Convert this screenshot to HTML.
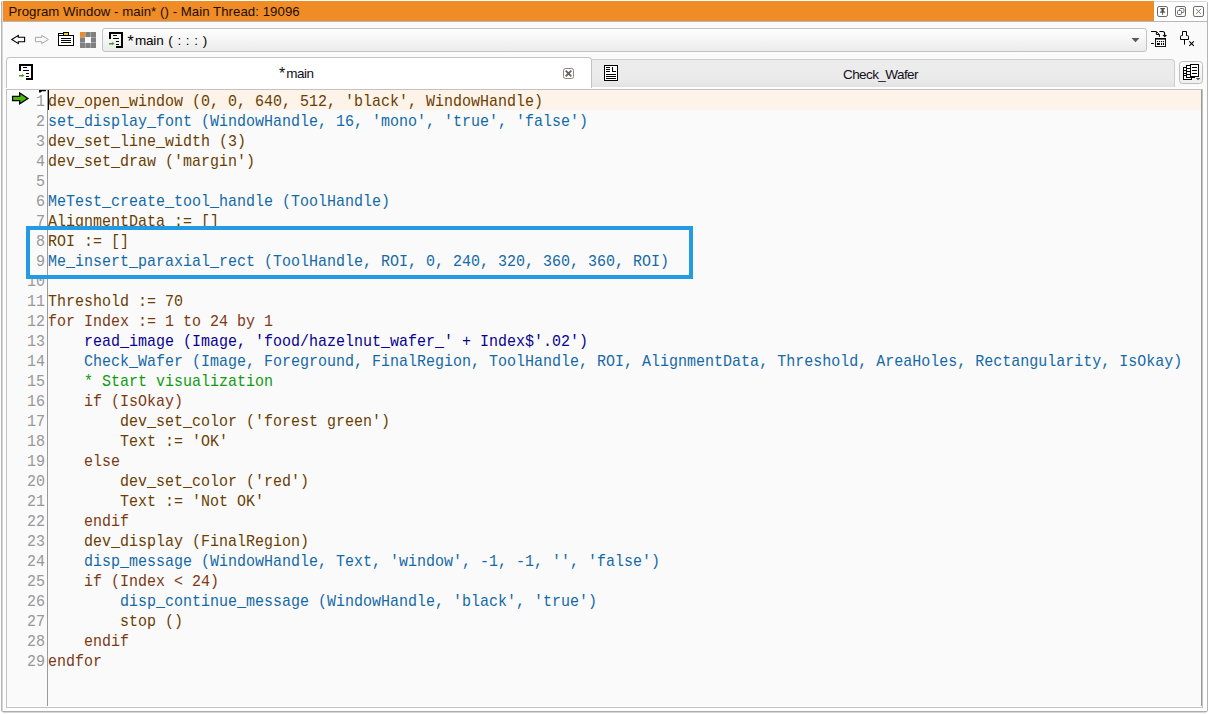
<!DOCTYPE html>
<html>
<head>
<meta charset="utf-8">
<title>Program Window</title>
<style>
html,body{margin:0;padding:0;}
body{width:1209px;height:714px;overflow:hidden;background:#ffffff;position:relative;font-family:"Liberation Sans",sans-serif;}
.abs{position:absolute;}
/* outer dock frame */
#frame{left:1px;top:1px;width:1207px;height:711px;box-sizing:border-box;border:1px solid #b4b4b4;border-bottom-color:#adadad;border-top-color:#d8d8d8;border-radius:0 3px 2px 2px;background:#fdfdfd;}
#frameL{left:2px;top:2px;width:1px;height:709px;background:#d9d9d9;}
#frameB{left:3px;top:712px;width:1203px;height:1px;background:#d6d6d6;}
#panel{left:3px;top:22px;width:1204px;height:66px;background:#fafafa;}
#title{left:3px;top:1px;width:1151px;height:20px;background:#f08c26;}
#title span{position:absolute;left:5.4px;top:3px;font-size:13.2px;line-height:15px;color:#200c00;white-space:nowrap;letter-spacing:0.06px;}
#titlebtns{left:1154px;top:2px;width:53px;height:19px;background:#ffffff;}
#titleline{left:3px;top:21px;width:1204px;height:1px;background:#b4b8bc;}
/* toolbar */
#combo{left:102px;top:28px;width:1045px;height:24px;box-sizing:border-box;border:1px solid #c2c2c2;border-radius:3px;background:linear-gradient(#fefefe,#f6f6f6 45%,#ebebeb);}
#combo span{position:absolute;left:25px;top:4px;font-size:13.5px;line-height:15px;color:#000;white-space:nowrap;word-spacing:1.45px;}
/* tabs */
#tabbase{left:7px;top:87px;width:1195px;height:2px;background:#fefefe;}
#tab1{left:6px;top:57px;width:586px;height:31px;box-sizing:border-box;border:1px solid #c3c3c3;border-bottom:none;border-radius:4px 4px 0 0;background:#ffffff;}
#tab2{left:592px;top:59px;width:583px;height:28px;box-sizing:border-box;border:1px solid #cdcdcd;border-left:none;border-bottom:none;border-radius:0 4px 0 0;background:linear-gradient(#ececec,#ebebeb 70%,#e2e2e2);}
.tabtxt{position:absolute;font-size:13.5px;line-height:15px;color:#10101a;white-space:nowrap;}
#tabbtn{left:1179px;top:61px;width:24px;height:23px;box-sizing:border-box;border:1px solid #bebebe;border-radius:3.5px;background:linear-gradient(#f9f9f9,#efefef);}
/* editor */
#editor{left:6px;top:89px;width:1197px;height:619px;box-sizing:border-box;border:1px solid #c2c2c2;background:#fafafa;}
#edR{left:1201px;top:90px;width:1px;height:616px;background:#9a9a9a;}
#edB{left:7px;top:706px;width:1195px;height:1px;background:#ffffff;}
#gutterline{left:47px;top:90px;width:1px;height:616px;background:#9a9a9a;}
#hl{left:48px;top:90px;width:1153px;height:20px;background:#fdf3e9;}
#numhl{left:38px;top:90px;width:9px;height:20px;background:#ffffff;}
#caret{left:48px;top:90px;width:1px;height:20px;background:#000;}
#code{left:48px;top:92.75px;transform:scaleY(1.06667);transform-origin:0 0;font-family:"Liberation Mono",monospace;font-size:15px;line-height:18.75px;white-space:pre;color:#6a3e02;margin:0;}
#nums{left:9px;top:92.75px;width:36px;transform:scaleY(1.06667);transform-origin:0 0;text-align:right;font-family:"Liberation Mono",monospace;font-size:15px;line-height:18.75px;white-space:pre;color:#989898;margin:0;}
.b{color:#1469a8;}
.n{color:#080094;}
.g{color:#109a10;}
.k{color:#6a3e02;}
.c{color:#7e3814;}
#roi{left:26px;top:226px;width:667px;height:53px;box-sizing:border-box;border:4px solid #229be4;}
#icons{left:0;top:0;}
</style>
</head>
<body>
<div id="frame" class="abs"></div>
<div id="frameL" class="abs"></div>
<div id="frameB" class="abs"></div>
<div id="panel" class="abs"></div>
<div id="title" class="abs"><span>Program Window - main* () - Main Thread: 19096</span></div>
<div id="titlebtns" class="abs"></div>
<div id="titleline" class="abs"></div>
<div id="combo" class="abs"><span style="font-size:16px;top:4.5px;left:24.6px;">*</span><span style="left:32px;letter-spacing:-0.2px;word-spacing:1.3px;">main ( : : : )</span></div>
<div id="tabbase" class="abs"></div>
<div id="tab2" class="abs"><span class="tabtxt" style="left:251px;top:7px;font-size:13.5px;letter-spacing:-0.58px;">Check_Wafer</span></div>
<div id="tab1" class="abs"><span class="tabtxt" style="left:272px;top:8px;font-size:16px;">*</span><span class="tabtxt" style="left:279.2px;top:8px;letter-spacing:-0.45px;">main</span></div>
<div id="tabbtn" class="abs"></div>
<div id="editor" class="abs"></div>
<div id="edR" class="abs"></div>
<div id="edB" class="abs"></div>
<div id="hl" class="abs"></div>
<div id="numhl" class="abs"></div>
<div id="gutterline" class="abs"></div>
<div id="caret" class="abs"></div>
<pre id="nums" class="abs">1
2
3
4
5
6
7
8
9
10
11
12
13
14
15
16
17
18
19
20
21
22
23
24
25
26
27
28
29</pre>
<pre id="code" class="abs"><span class="k">dev_open_window (0, 0, 640, 512, 'black', WindowHandle)</span>
<span class="b">set_display_font (WindowHandle, 16, 'mono', 'true', 'false')</span>
<span class="k">dev_set_line_width (3)</span>
<span class="k">dev_set_draw ('margin')</span>

<span class="b">MeTest_create_tool_handle (ToolHandle)</span>
<span class="k">AlignmentData := []</span>
<span class="k">ROI := []</span>
<span class="b">Me_insert_paraxial_rect (ToolHandle, ROI, 0, 240, 320, 360, 360, ROI)</span>

<span class="k">Threshold := 70</span>
<span class="c">for Index := 1 to 24 by 1</span>
    <span class="n">read_image (Image, 'food/hazelnut_wafer_' + Index$'.02')</span>
    <span class="b">Check_Wafer (Image, Foreground, FinalRegion, ToolHandle, ROI, AlignmentData, Threshold, AreaHoles, Rectangularity, IsOkay)</span>
    <span class="g">* Start visualization</span>
    <span class="c">if (IsOkay)</span>
        <span class="k">dev_set_color ('forest green')</span>
        <span class="k">Text := 'OK'</span>
    <span class="c">else</span>
        <span class="k">dev_set_color ('red')</span>
        <span class="k">Text := 'Not OK'</span>
    <span class="c">endif</span>
    <span class="k">dev_display (FinalRegion)</span>
    <span class="b">disp_message (WindowHandle, Text, 'window', -1, -1, '', 'false')</span>
    <span class="c">if (Index &lt; 24)</span>
        <span class="b">disp_continue_message (WindowHandle, 'black', 'true')</span>
        <span class="k">stop ()</span>
    <span class="c">endif</span>
<span class="c">endfor</span></pre>
<div id="roi" class="abs"></div>
<svg id="icons" class="abs" width="1209" height="714" viewBox="0 0 1209 714">

<!-- title buttons -->
<g fill="none" stroke="#6c6a68" stroke-width="1">
<rect x="1157.5" y="6.5" width="10" height="10" rx="1.6"/>
<rect x="1175.5" y="6.5" width="10" height="10" rx="1.6"/>
<rect x="1193.5" y="6.5" width="10" height="10" rx="1.6"/>
</g>
<!-- pin -->
<g fill="#545250">
<rect x="1160.3" y="8" width="4.6" height="1.2"/>
<rect x="1161.4" y="8" width="2.4" height="4"/>
<rect x="1160" y="11.5" width="5.2" height="1.2"/>
<rect x="1162.1" y="12" width="1" height="2.8"/>
</g>
<!-- restore -->
<g fill="none" stroke="#6c6a68" stroke-width="1">
<rect x="1179.5" y="8.5" width="4.4" height="4" rx="1"/>
<rect x="1177.5" y="10.5" width="4" height="4" rx="1" fill="#ffffff"/>
</g>
<!-- close -->
<g stroke="#6c6a68" stroke-width="0.9" fill="none">
<path d="M1196.1 8.9 L1201 13.9 M1201 8.9 L1196.1 13.9"/>
</g>

<!-- back arrow -->
<path d="M11.8 39.5 L18.3 35.4 L18.3 37.3 L24.6 37.3 L24.6 41.7 L18.3 41.7 L18.3 43.6 Z" fill="none" stroke="#000" stroke-width="1.1" stroke-linejoin="miter"/>
<!-- forward arrow (disabled) -->
<path d="M48.4 39.5 L41.8 35.4 L41.8 37.3 L35.4 37.3 L35.4 41.7 L41.8 41.7 L41.8 43.6 Z" fill="none" stroke="#a6a6a6" stroke-width="1" stroke-linejoin="miter"/>
<!-- clipboard -->
<g shape-rendering="crispEdges">
<rect x="58" y="33" width="16" height="13" fill="#ffffff"/>
<rect x="63" y="32" width="6" height="4" fill="#000"/>
<rect x="64" y="33" width="4" height="2" fill="#ffd200"/>
<rect x="58" y="33" width="6" height="1" fill="#000"/>
<rect x="58" y="35" width="16" height="1" fill="#000"/>
<rect x="58" y="33" width="1" height="13" fill="#000"/>
<rect x="73" y="35" width="1" height="11" fill="#000"/>
<rect x="58" y="45" width="16" height="1" fill="#000"/>
<rect x="59" y="34" width="4" height="1" fill="#ffffff"/>
<rect x="61" y="38" width="10" height="1" fill="#000"/>
<rect x="61" y="40" width="10" height="1" fill="#000"/>
<rect x="61" y="42" width="10" height="1" fill="#000"/>
</g>
<!-- grid -->
<g>
<rect x="80" y="32" width="16" height="16" fill="#c4c4c4"/>
<rect x="80" y="32" width="5" height="5" fill="#f08c26"/>
<rect x="85.6" y="32" width="4.8" height="5" fill="#808080"/>
<rect x="91" y="32" width="5" height="5" fill="#808080"/>
<rect x="80" y="37.6" width="5" height="4.8" fill="#808080"/>
<rect x="85" y="37" width="6" height="6" fill="#fbfbfb"/>
<rect x="91" y="37.6" width="5" height="4.8" fill="#808080"/>
<rect x="80" y="43" width="5" height="5" fill="#808080"/>
<rect x="85.6" y="43" width="4.8" height="5" fill="#808080"/>
<rect x="91" y="43" width="5" height="5" fill="#808080"/>
</g>
<g transform="translate(109,32)">
<g fill="#000" shape-rendering="crispEdges">
<rect x="0" y="0" width="14" height="2"/>
<rect x="0" y="0" width="2" height="7"/>
<rect x="12" y="0" width="2" height="16"/>
<rect x="7" y="14" width="7" height="2"/>
<rect x="4" y="3" width="4" height="1"/>
<rect x="4" y="6" width="6" height="1"/>
<rect x="7" y="9" width="3" height="1"/>
<rect x="7" y="12" width="3" height="1"/>
</g>
<path d="M0 10.9 L3 10.9 L3 10 L5.6 11.6 L3 13.3 L3 12.4 L0 12.4 Z" fill="#4e9a1c"/>
</g><g transform="translate(19,64)">
<g fill="#000" shape-rendering="crispEdges">
<rect x="0" y="0" width="14" height="2"/>
<rect x="0" y="0" width="2" height="7"/>
<rect x="12" y="0" width="2" height="16"/>
<rect x="7" y="14" width="7" height="2"/>
<rect x="4" y="3" width="4" height="1"/>
<rect x="4" y="6" width="6" height="1"/>
<rect x="7" y="9" width="3" height="1"/>
<rect x="7" y="12" width="3" height="1"/>
</g>
<path d="M0 10.9 L3 10.9 L3 10 L5.6 11.6 L3 13.3 L3 12.4 L0 12.4 Z" fill="#4e9a1c"/>
</g>
<!-- combo dropdown arrow -->
<path d="M1131.5 38 L1139.5 38 L1135.5 42.2 Z" fill="#5a5a5a"/>
<!-- toolbar right icon 1 -->
<g fill="none" stroke="#000" stroke-width="1">
<path d="M1151 31.5 L1156.3 31.5 L1159.4 34.6 L1159.4 36.9"/>
<path d="M1156.4 31.5 L1156.4 34.5 L1159.4 34.5"/>
<path d="M1159.4 31.5 L1162.6 31.5 Q1164.6 31.5 1164.6 33.5 L1164.6 35.5" stroke-width="1.15"/>
</g>
<path d="M1162.4 34.9 L1167.2 34.9 L1164.8 37.2 Z" fill="#000"/>
<g fill="#000">
<rect x="1155" y="38" width="11" height="8.9"/>
<rect x="1155.9" y="39.6" width="9.2" height="6.4" fill="#fff"/>
<rect x="1156.9" y="41" width="1.1" height="1.1"/>
<rect x="1158.9" y="41" width="1.1" height="1.1"/>
<rect x="1160.9" y="41" width="1.1" height="1.1"/>
<rect x="1162.9" y="41" width="1.1" height="1.1"/>
<rect x="1156.9" y="43" width="3" height="2" rx="0.3"/>
<rect x="1161" y="43" width="1.1" height="2" rx="0.3"/>
<rect x="1163" y="43" width="1.1" height="2" rx="0.3"/>
<rect x="1151" y="43" width="2.9" height="1"/>
</g>
<!-- toolbar right icon 2: pin with x -->
<g fill="none" stroke="#000" stroke-width="1">
<path d="M1182.5 31.5 L1186.5 31.5 L1186.5 35.6 L1187.5 35.6 Q1188.5 35.6 1188.5 36.6 L1188.5 39.5 L1180.5 39.5 L1180.5 36.6 Q1180.5 35.6 1181.5 35.6 L1182.5 35.6 Z"/>
<path d="M1184.5 39.5 L1184.5 44.6"/>
<path d="M1189.3 41.3 L1193.8 45.8 M1193.8 41.3 L1189.3 45.8" stroke-width="1.1"/>
</g>
<!-- tab close button -->
<rect x="563.5" y="68.5" width="10" height="10" rx="2" fill="#ffffff" stroke="#8a8482" stroke-width="1"/>
<path d="M565.7 70.7 L571.3 76.3 M571.3 70.7 L565.7 76.3" stroke="#666462" stroke-width="1.9" fill="none"/>
<!-- tab2 icon -->
<g shape-rendering="crispEdges" fill="#000">
<rect x="604" y="65" width="14" height="16"/>
<rect x="605" y="66" width="12" height="14" fill="#fff"/>
<rect x="606" y="67" width="4" height="1"/>
<rect x="606" y="69" width="4" height="1"/>
<rect x="606" y="71" width="4" height="1"/>
<rect x="612" y="67" width="1" height="5"/>
<rect x="612" y="71" width="4" height="1"/>
<rect x="606" y="74" width="10" height="1"/>
<rect x="606" y="76" width="10" height="1"/>
<rect x="606" y="78" width="10" height="1"/>
</g>
<!-- tab list button icon -->
<g shape-rendering="crispEdges" fill="#000">
<rect x="1183" y="67" width="9" height="13"/>
<rect x="1184" y="68" width="7" height="11" fill="#fff"/>
<rect x="1184" y="70" width="2" height="1"/>
<rect x="1184" y="73" width="2" height="1"/>
<rect x="1184" y="75" width="2" height="1"/>
<rect x="1186" y="65" width="9" height="13"/>
<rect x="1187" y="66" width="7" height="11" fill="#fff"/>
<rect x="1187" y="68" width="3" height="1"/>
<rect x="1187" y="71" width="3" height="1"/>
<rect x="1187" y="74" width="3" height="1"/>
<rect x="1190" y="64" width="9" height="13"/>
<rect x="1191" y="65" width="7" height="11" fill="#fff"/>
<rect x="1192" y="67" width="5" height="1"/>
<rect x="1192" y="70" width="5" height="1"/>
<rect x="1192" y="73" width="5" height="1"/>
</g>
<path d="M1195.7 77.9 L1200.5 77.9 L1198.1 80.3 Z" fill="#505050"/>
<!-- program counter arrow -->
<path d="M12.6 96.3 L19.7 96.3 L19.7 93 L27.9 98.45 L19.7 103.9 L19.7 100.6 L12.6 100.6 Z" fill="#4cb80c" stroke="#000" stroke-width="1.3" stroke-linejoin="miter"/>
<!-- insert cursor marker -->
<path d="M39 90 L46 90 L46 91.3 L42 91.3 L40.6 92.6 L39 92.6 Z" fill="#000"/>
<!--ICONS3-->
</svg>
</body>
</html>
